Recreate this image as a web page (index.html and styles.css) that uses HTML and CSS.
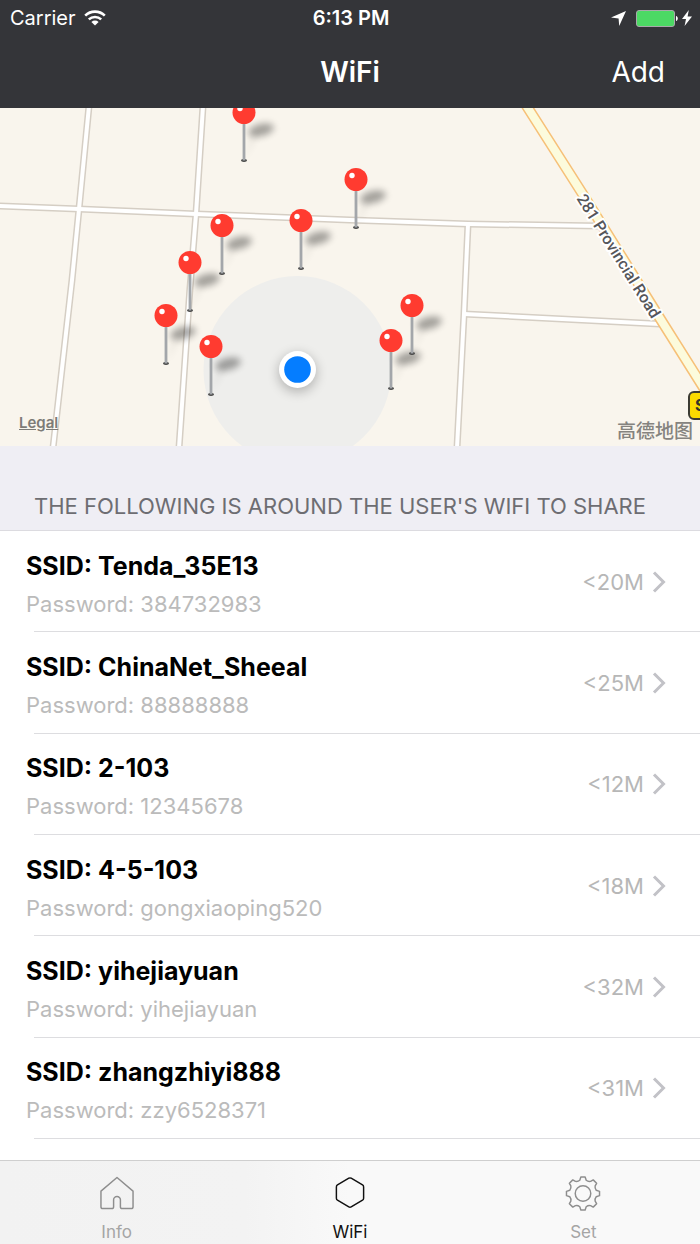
FILE: index.html
```
<!DOCTYPE html>
<html lang="en">
<head>
  <meta charset="UTF-8">
  <meta name="viewport" content="width=device-width, initial-scale=1.0">
  <title>WiFi</title>
  <link rel="stylesheet" href="styles.css">
</head>
<body>
  <header class="header">
    <div class="status-bar">
      <div class="status-left">
        <span>Carrier</span>
        <svg class="wifi-icon" width="22" height="16" viewBox="0 0 22 16">
          <path d="M1.2 5.6a14 14 0 0 1 19.6 0" fill="none" stroke="#fff" stroke-width="2.6"/>
          <path d="M4.8 9.4a9 9 0 0 1 12.4 0" fill="none" stroke="#fff" stroke-width="2.5"/>
          <path d="M11 15.6 7.4 12a5.2 5.2 0 0 1 7.2 0z" fill="#fff"/>
        </svg>
      </div>
      <div class="status-time">6:13 PM</div>
      <div class="status-right">
        <svg width="15" height="15" viewBox="0 0 15 15"><path d="M15 0 8.2 15 7.6 7.4 0 6.6z" fill="#fff"/></svg>
        <svg class="battery" width="42" height="17" viewBox="0 0 42 17">
          <rect x=".5" y=".5" width="38" height="16" rx="2.5" fill="#4cd964" stroke="#a9a9ab"/>
          <path d="M40 6c2.4.6 2.4 4.4 0 5z" fill="#fff"/>
        </svg>
        <svg width="10" height="16" viewBox="0 0 10 16"><path d="M6.8 0 0 9h4L2.6 16 10 6.6H5.6z" fill="#fff"/></svg>
      </div>
    </div>
    <nav class="nav-bar">
      <h1>WiFi</h1>
      <button type="button" class="add-button">Add</button>
    </nav>
  </header>

  <main>
    <div class="map">
      <svg class="map-canvas" viewBox="0 0 700 338" preserveAspectRatio="xMidYMid slice">
        <defs>
          <filter id="soft" x="-60%" y="-150%" width="220%" height="400%"><feGaussianBlur stdDeviation="3.6"/></filter>
          <filter id="softer" x="-60%" y="-60%" width="220%" height="220%"><feGaussianBlur stdDeviation="6"/></filter>
          <g id="roads">
            <path d="M89 -2 79 101 72 172 53 340"/>
            <path d="M203 -2 196 106 190 180 179 340"/>
            <path d="M-2 98 79 101 196 106 350 112 468 116 600 118"/>
            <path d="M468 116 464 206 457 340"/>
            <path d="M464 206 660 216"/>
          </g>
          <g id="shadow">
            <ellipse cx="17" cy="18" rx="13" ry="6" transform="rotate(-14 17 18)" fill="#000" opacity=".35" filter="url(#soft)"/>
            <path d="M1 47 8 22h6z" fill="#000" opacity=".07" filter="url(#soft)"/>
          </g>
          <g id="pin">
            <ellipse cy="48.500" rx="3" ry="1.4" fill="#444"/>
            <path d="M0 8V48.500" stroke="#a3a6aa" stroke-width="2.8"/>
            <circle cy=".500" r="11.5" fill="#ff3b30"/>
            <circle cx="-4" cy="-3.500" r="2.7" fill="#fff"/>
          </g>
        </defs>

        <circle cx="297.500" cy="262" r="94" fill="#eeeeec"/>
        <use href="#roads" class="road-edge"/>
        <use href="#roads" class="road"/>
        <path class="highway-edge" d="M526 -3 582 85 661 212 710 290"/>
        <path class="highway" d="M526 -3 582 85 661 212 710 290"/>
        <text class="road-name" transform="translate(614 151) rotate(58)">281 Provincial Road</text>

        <rect x="689" y="284" width="50" height="27" rx="5" fill="#fbdb00" stroke="#3c3b33" stroke-width="2"/>
        <text class="road-badge" x="695" y="303">S</text>

        <use href="#shadow" x="244" y="4"/>
        <use href="#shadow" x="356" y="71"/>
        <use href="#shadow" x="301" y="112"/>
        <use href="#shadow" x="222" y="117"/>
        <use href="#shadow" x="190" y="154"/>
        <use href="#shadow" x="412" y="197"/>
        <use href="#shadow" x="166" y="207"/>
        <use href="#shadow" x="391" y="232"/>
        <use href="#shadow" x="211" y="238"/>

        <use href="#pin" x="244" y="4"/>
        <use href="#pin" x="356" y="71"/>
        <use href="#pin" x="301" y="112"/>
        <use href="#pin" x="222" y="117"/>
        <use href="#pin" x="190" y="154"/>
        <use href="#pin" x="412" y="197"/>
        <use href="#pin" x="166" y="207"/>
        <use href="#pin" x="391" y="232"/>
        <use href="#pin" x="211" y="238"/>

        <!-- current location -->
        <circle cx="297.500" cy="265" r="19" fill="#000" opacity=".25" filter="url(#softer)"/>
        <circle cx="297.500" cy="261.500" r="18.500" fill="#fff"/>
        <circle cx="297.500" cy="261.500" r="13.300" fill="#057dff"/>
      </svg>
      <a href="#legal" class="legal">Legal</a>
      <span class="map-logo" lang="zh">高德地图</span>
    </div>

    <h2 class="section-title">The following is around the user's WiFi to share</h2>

    <ul class="wifi-list">
      <li><a href="#wifi-1" class="wifi-row">
        <div class="wifi-text"><div class="ssid">SSID: Tenda_35E13</div><div class="password">Password: 384732983</div></div>
        <span class="distance">&lt;20M</span>
        <svg class="chevron" viewBox="0 0 14 22"><path d="M2 1.500 11.500 11 2 20.500"/></svg>
      </a></li>
      <li><a href="#wifi-2" class="wifi-row">
        <div class="wifi-text"><div class="ssid">SSID: ChinaNet_Sheeal</div><div class="password">Password: 88888888</div></div>
        <span class="distance">&lt;25M</span>
        <svg class="chevron" viewBox="0 0 14 22"><path d="M2 1.500 11.500 11 2 20.500"/></svg>
      </a></li>
      <li><a href="#wifi-3" class="wifi-row">
        <div class="wifi-text"><div class="ssid">SSID: 2-103</div><div class="password">Password: 12345678</div></div>
        <span class="distance">&lt;12M</span>
        <svg class="chevron" viewBox="0 0 14 22"><path d="M2 1.500 11.500 11 2 20.500"/></svg>
      </a></li>
      <li><a href="#wifi-4" class="wifi-row">
        <div class="wifi-text"><div class="ssid">SSID: 4-5-103</div><div class="password">Password: gongxiaoping520</div></div>
        <span class="distance">&lt;18M</span>
        <svg class="chevron" viewBox="0 0 14 22"><path d="M2 1.500 11.500 11 2 20.500"/></svg>
      </a></li>
      <li><a href="#wifi-5" class="wifi-row">
        <div class="wifi-text"><div class="ssid">SSID: yihejiayuan</div><div class="password">Password: yihejiayuan</div></div>
        <span class="distance">&lt;32M</span>
        <svg class="chevron" viewBox="0 0 14 22"><path d="M2 1.500 11.500 11 2 20.500"/></svg>
      </a></li>
      <li><a href="#wifi-6" class="wifi-row">
        <div class="wifi-text"><div class="ssid">SSID: zhangzhiyi888</div><div class="password">Password: zzy6528371</div></div>
        <span class="distance">&lt;31M</span>
        <svg class="chevron" viewBox="0 0 14 22"><path d="M2 1.500 11.500 11 2 20.500"/></svg>
      </a></li>
    </ul>
  </main>

  <nav class="tab-bar">
    <a href="#info" class="tab">
      <svg width="36" height="36" viewBox="0 0 36 36"><path d="M18 1.500 34.500 15.500V31.500a2 2 0 0 1-2 2H23.500a2 2 0 0 1-2-2V24.500a3.500 3.500 0 0 0-7 0V31.500a2 2 0 0 1-2 2H3.500a2 2 0 0 1-2-2V15.500z"/></svg>
      <span>Info</span>
    </a>
    <a href="#wifi" class="tab active">
      <svg width="36" height="36" viewBox="0 0 36 36"><path d="M16.800 2.300a2.400 2.400 0 0 1 2.400 0L30.900 9.200a2.400 2.400 0 0 1 1.100 2V22.800a2.400 2.400 0 0 1-1.100 2L19.200 31.700a2.400 2.400 0 0 1-2.400 0L5.100 24.800a2.400 2.400 0 0 1-1.100-2V11.200a2.400 2.400 0 0 1 1.100-2z"/></svg>
      <span>WiFi</span>
    </a>
    <a href="#set" class="tab">
      <svg width="36" height="36" viewBox="0 0 36 36">
        <circle cx="18" cy="18" r="8"/>
        <path d="M15.800 1h4.400l1.100 3.400q2 1.600 4.500 1.100l2.700-1.500 3.500 3.500-1.500 2.700q-.5 2.500 1.100 4.500l3.400 1.100v4.400l-3.400 1.100q-1.600 2-1.100 4.500l1.500 2.700-3.500 3.500-2.700-1.500q-2.500-.5-4.500 1.100l-1.100 3.400h-4.400l-1.100-3.400q-2-1.600-4.500-1.100l-2.700 1.500-3.500-3.500 1.500-2.700q.5-2.500-1.100-4.500l-3.400-1.100v-4.400l3.400-1.100q1.600-2 1.100-4.500l-1.500-2.700 3.500-3.500 2.700 1.500q2.500.5 4.500-1.100z"/>
      </svg>
      <span>Set</span>
    </a>
  </nav>
</body>
</html>
```

FILE: styles.css
```
* {
  box-sizing: border-box;
}

body {
  font-family: Inter, "Liberation Sans", "Noto Sans CJK SC", sans-serif;
  background-color: #fff;
  color: #000;
  display: flex;
  flex-direction: column;
  min-height: 100vh;
  margin: 0;
}

a {
  color: inherit;
  text-decoration: none;
}

.header {
  background-color: #343539;
  color: #fff;
}

.status-bar {
  display: grid;
  grid-template-columns: 1fr auto 1fr;
  align-items: center;
  height: 36px;
  padding: 0 8px 0 10px;
  font-size: 20px;
}

.status-left,
.status-right {
  display: flex;
  align-items: center;
  gap: 8px;
}

.status-right {
  justify-content: flex-end;
}

.battery {
  margin: 0 -4px 0 2px;
}

.status-time {
  font-weight: 600;
}

.nav-bar {
  display: grid;
  grid-template-columns: 1fr auto 1fr;
  align-items: center;
  height: 72px;
  padding: 0 35px;
}

.nav-bar h1 {
  grid-column: 2;
  margin: 0;
  font-size: 28px;
  font-weight: 600;
}

.add-button {
  justify-self: end;
  padding: 0;
  border: none;
  background: none;
  color: #fff;
  font-family: inherit;
  font-size: 28px;
  cursor: pointer;
}

.map {
  position: relative;
  height: 338px;
  overflow: hidden;
  background-color: #f9f5ed;
}

.map-canvas {
  display: block;
  width: 100%;
  height: 100%;
}

.road-edge,
.road,
.highway-edge,
.highway {
  fill: none;
}

.road-edge {
  stroke: #d5cec4;
  stroke-width: 7px;
}

.road {
  stroke: #fff;
  stroke-width: 4px;
}

.highway-edge {
  stroke: #f6c078;
  stroke-width: 11px;
}

.highway {
  stroke: #fcfbdc;
  stroke-width: 8px;
}

.road-name {
  font-family: Roboto, sans-serif;
  font-size: 16px;
  font-weight: 500;
  text-anchor: middle;
  fill: #55565a;
  stroke: #fff;
  stroke-width: 4px;
  stroke-linejoin: round;
  paint-order: stroke;
}

.road-badge {
  font-size: 16px;
  font-weight: 700;
  fill: #33322a;
}

.legal {
  position: absolute;
  left: 19px;
  bottom: 14px;
  font-size: 15px;
  font-weight: 600;
  color: #7d7b77;
  text-decoration: underline;
}

.map-logo {
  position: absolute;
  right: 7px;
  bottom: 3px;
  font-family: "Noto Sans CJK SC", sans-serif;
  font-size: 19px;
  font-weight: 500;
  color: #85837f;
}

.section-title {
  margin: 0;
  padding: 46px 34px 10px;
  background-color: #efeef4;
  border-bottom: 1px solid #dcdbe0;
  color: #6d6d72;
  font-size: 22px;
  font-weight: 400;
  line-height: 28px;
  text-transform: uppercase;
}

.wifi-list {
  display: grid;
  grid-auto-rows: 1fr;
  min-height: 608px;
  margin: 0;
  padding: 0;
  list-style: none;
}

.wifi-row {
  display: flex;
  align-items: center;
  height: 100%;
  padding: 0 34px 0 26px;
  background: linear-gradient(#dddde0, #dddde0) 34px 100% / 100% 1px no-repeat;
}

.wifi-text {
  flex: 1;
  padding-top: 6px;
  line-height: 38px;
}

.ssid {
  font-size: 25px;
  font-weight: 700;
}

.password {
  font-size: 22px;
  color: #bbb;
}

.distance {
  font-size: 22px;
  color: #b7b7b7;
}

.chevron {
  width: 14px;
  height: 22px;
  margin-left: 8px;
  fill: none;
  stroke: #c2c2c7;
  stroke-width: 3px;
}

.tab-bar {
  position: sticky;
  bottom: 0;
  display: flex;
  height: 84px;
  margin-top: auto;
  border-top: 1px solid #cfcfcf;
  background: linear-gradient(90deg, #f2f2f2, #f3f3f3 35%, #f9f9f9 50%);
}

.tab {
  flex: 1;
  display: flex;
  flex-direction: column;
  align-items: center;
  gap: 9px;
  padding-top: 15px;
  font-size: 17px;
  line-height: 24px;
  color: #a5a5a5;
}

.tab svg {
  fill: none;
  stroke: #8e8e8e;
  stroke-width: 1.5px;
  stroke-linejoin: round;
}

.tab.active {
  color: #111;
}

.tab.active svg {
  stroke: #111;
}
```
